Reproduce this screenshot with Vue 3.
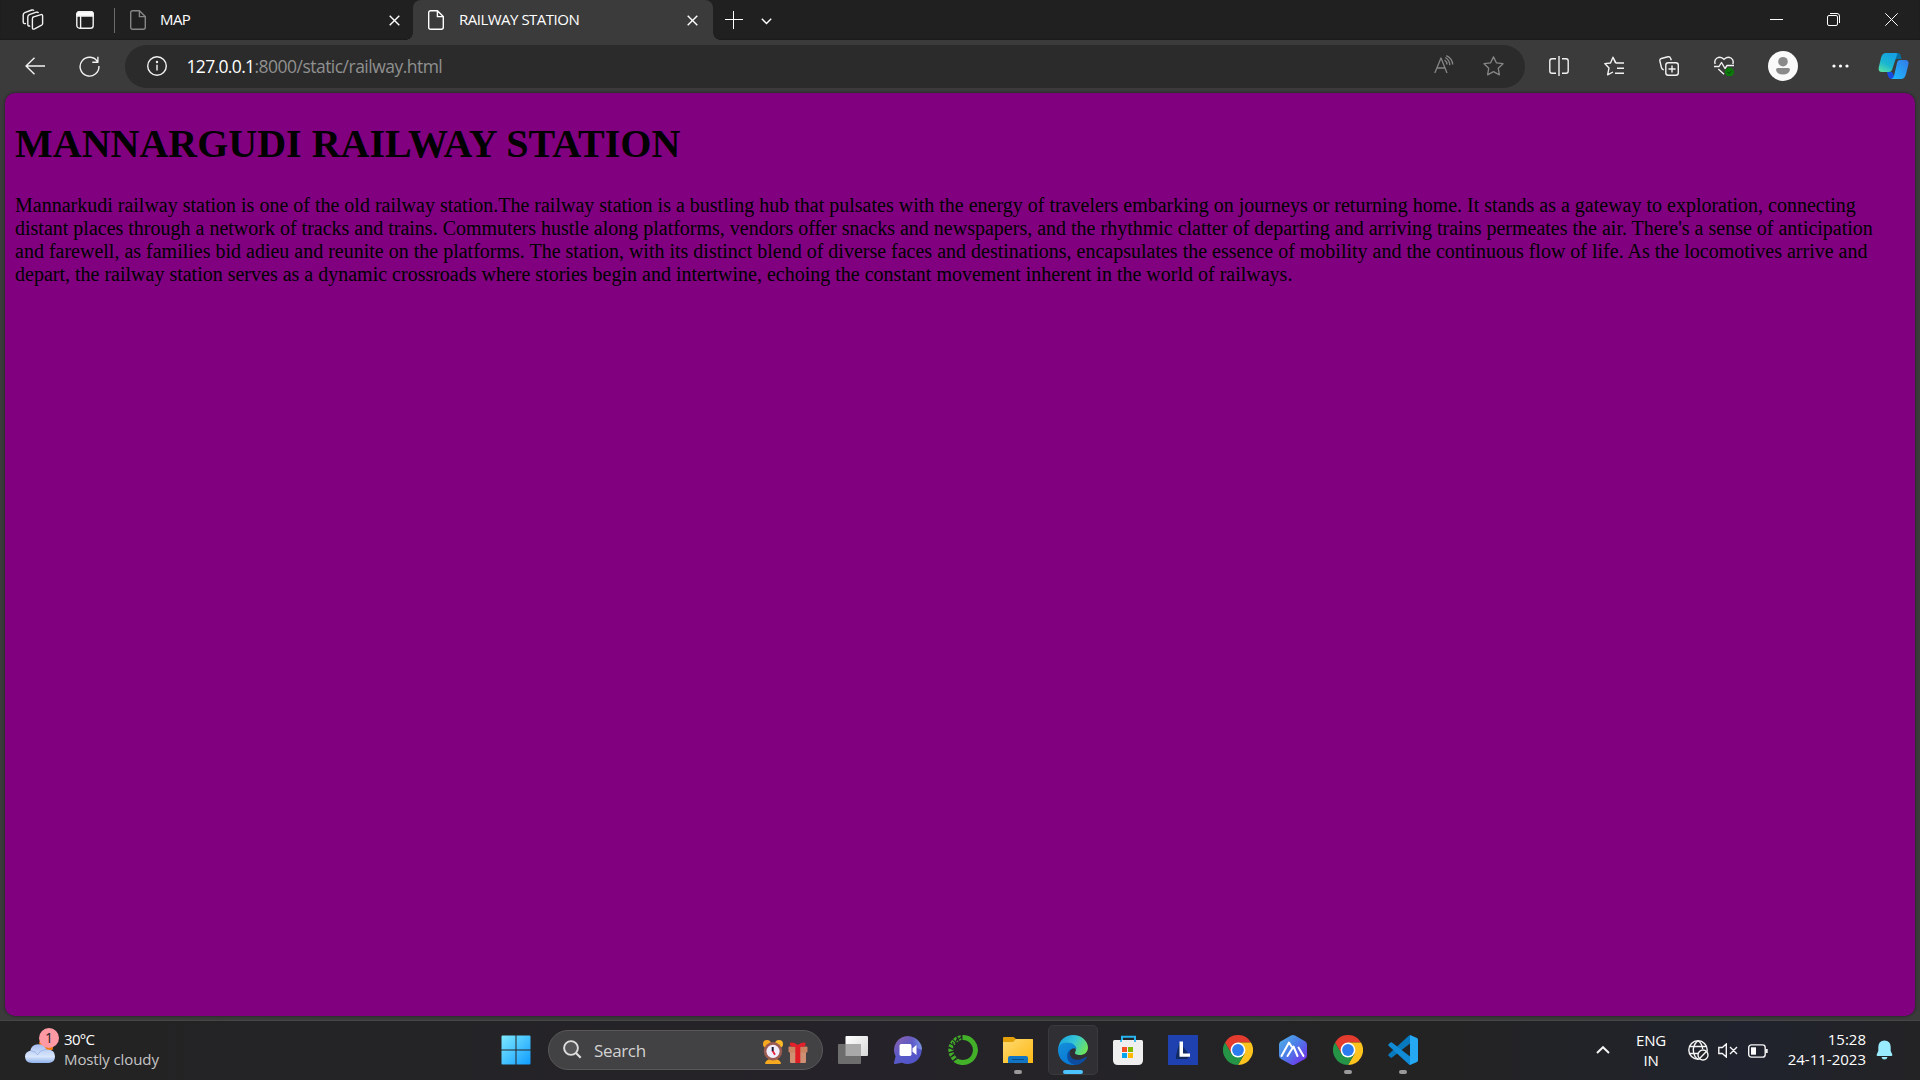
<script setup>
const paragraph =
  "Mannarkudi railway station is one of the old railway station.The railway station is a bustling hub that pulsates with the energy of travelers embarking on journeys or returning home. It stands as a gateway to exploration, connecting distant places through a network of tracks and trains. Commuters hustle along platforms, vendors offer snacks and newspapers, and the rhythmic clatter of departing and arriving trains permeates the air. There's a sense of anticipation and farewell, as families bid adieu and reunite on the platforms. The station, with its distinct blend of diverse faces and destinations, encapsulates the essence of mobility and the continuous flow of life. As the locomotives arrive and depart, the railway station serves as a dynamic crossroads where stories begin and intertwine, echoing the constant movement inherent in the world of railways."

const apps = [
  { id: 'taskview' },
  { id: 'chat' },
  { id: 'anaconda' },
  { id: 'folder', running: true },
  { id: 'edge', active: true },
  { id: 'store' },
  { id: 'lens' },
  { id: 'chrome' },
  { id: 'hex' },
  { id: 'chrome', running: true },
  { id: 'code', running: true },
]
</script>

<template>
  <div class="screen">
    <header class="tabstrip">
      <div class="strip-btn workspaces">
        <svg width="22" height="22" viewBox="0 0 22 22" class="line">
          <path d="M10.8 8.2 19 5.6Q20.6 5.2 20.6 6.8V14.4Q20.6 15.5 19.6 16.1L12.6 19.8Q10.4 20.7 10.4 18.8V9.8Q10.4 8.6 11.4 8.2Z" />
          <path d="M8.2 16.8Q5.8 17.6 5.8 15.5V8Q5.8 6.3 7.3 5.7L14.3 3.2Q16 2.8 16.3 4.2" />
          <path d="M4 14.4Q1.2 15.2 1.2 13V6Q1.2 4.3 2.7 3.7L9.8 1Q11.4.6 11.8 1.8" />
        </svg>
      </div>
      <div class="strip-btn actions">
        <svg width="18" height="18" viewBox="0 0 18 18" class="line">
          <rect x=".8" y=".8" width="16.4" height="16.4" rx="2.8" />
          <path d="M.8 5V3.2Q.8.8 3.2.8H14.8Q17.2.8 17.2 3.2V5Z" fill="#fff" />
          <path d="M4.6 5V17" />
        </svg>
      </div>
      <i class="divider"></i>
      <div class="tab">
        <svg class="doc dim" width="16" height="20" viewBox="0 0 16 20"><path d="M2.7.7H9.4L15.3 6.6V17.3Q15.3 19.3 13.3 19.3H2.7Q.7 19.3.7 17.3V2.7Q.7.7 2.7.7ZM9.4.7V6.6H15.3" /></svg>
        <span class="title map">MAP</span>
        <svg class="x" width="11" height="11" viewBox="0 0 11 11"><path d="M.7.7 10.3 10.3M10.3.7.7 10.3" /></svg>
      </div>
      <div class="tab current">
        <svg class="doc" width="16" height="20" viewBox="0 0 16 20"><path d="M2.7.7H9.4L15.3 6.6V17.3Q15.3 19.3 13.3 19.3H2.7Q.7 19.3.7 17.3V2.7Q.7.7 2.7.7ZM9.4.7V6.6H15.3" /></svg>
        <span class="title rail">RAILWAY STATION</span>
        <svg class="x" width="11" height="11" viewBox="0 0 11 11"><path d="M.7.7 10.3 10.3M10.3.7.7 10.3" /></svg>
      </div>
      <svg class="plus" width="18" height="18" viewBox="0 0 18 18"><path d="M0 8.5H18M8.5 0V18" /></svg>
      <svg class="more" width="11" height="7" viewBox="0 0 11 7"><path d="M.8.8 5.5 5.6 10.2.8" /></svg>
      <div class="window-controls">
        <svg width="13" height="13" viewBox="0 0 13 13"><path d="M0 6.5H13" /></svg>
        <svg width="13" height="13" viewBox="0 0 13 13"><rect x=".5" y="2.5" width="10" height="10" rx="1.5" /><path d="M3 .5H10Q12.5.5 12.5 3V10" /></svg>
        <svg width="13" height="13" viewBox="0 0 13 13"><path d="M.3.3 12.7 12.7M12.7.3.3 12.7" /></svg>
      </div>
    </header>

    <nav class="toolbar">
      <svg class="back line" width="20" height="18" viewBox="0 0 20 18"><path d="M20 9H1M9.5.7 1 9 9.5 17.3" /></svg>
      <svg class="reload line" width="21" height="21" viewBox="0 0 21 21"><path d="M18.8 6.2A9.4 9.4 0 1 0 19.9 10M18.9.7V6.2H13.3" /></svg>
      <div class="address">
        <svg class="info line" width="20" height="20" viewBox="0 0 20 20"><circle cx="10" cy="10" r="9.3" /><path d="M10 8.8V14.5" /><circle cx="10" cy="6" r=".5" fill="#fff" /></svg>
        <span class="url"><b>127.0.0.1</b>:8000/static/railway.html</span>
        <svg class="read" width="20" height="19" viewBox="0 0 20 19"><path d="M.8 18 7 3 13 18M3 13H11M10.5 5Q13 6.5 13 9.5M11.2 2.5Q15.8 5 15.8 10.3M12.3.6Q18.5 3.7 18.7 9.5" /></svg>
        <svg class="star" width="21" height="20" viewBox="0 0 21 20"><path d="M10.5.9 13.4 6.8 20 7.7 15.3 12.3 16.4 18.8 10.5 15.7 4.6 18.8 5.7 12.3 1 7.7 7.6 6.8Z" /></svg>
      </div>
      <div class="tools">
        <span><svg class="line" width="20" height="20" viewBox="0 0 20 20"><path d="M7 2.8H3Q.8 2.8.8 5V15Q.8 17.2 3 17.2H7M13 2.8H17Q19.2 2.8 19.2 5V15Q19.2 17.2 17 17.2H13M10 0V20" /></svg></span>
        <span><svg class="line" width="20" height="20" viewBox="0 0 20 20"><path d="M11.5 7 9 1.2 6.5 7 .8 7.6 5 12.1 3.6 18.8 9 16M9 1.2 12 7H20M13 12.2H20M11 17.2H20" /></svg></span>
        <span><svg class="line" width="20" height="20" viewBox="0 0 20 20"><rect x="6.8" y="6.8" width="12.5" height="12.5" rx="2.5" /><path d="M13 9.5V16.6M9.5 13H16.6M4.8 13.7Q3 13.7 2.5 11.8L.9 5Q.5 3 2.3 2.5L9 .8Q11 .4 11.5 2L12.3 4.2" /></svg></span>
        <span><svg class="line heart" width="20" height="20" viewBox="0 0 20 20"><path d="M1.2 8Q-.2 4 3 2Q7-.2 10 3.4Q13-.2 17 2Q20.2 4 18.8 8M0 10.5H5L7.5 6.5 11 12.5 13 9.5H20M4.3 13 10 18.3" /><circle cx="15.5" cy="16" r="4.5" fill="#0b7a0b" stroke="none" /><path d="M13.4 16.2 15 17.5 17.6 14.8" stroke="#07400b" stroke-width="1" /></svg></span>
        <span class="profile"><svg width="30" height="30" viewBox="0 0 30 30"><circle cx="15" cy="15" r="15" fill="#fafafa" /><circle cx="15" cy="10.7" r="4.8" fill="#8a8a8a" /><path d="M9.8 17H20.2Q22 17 22 18.8 21 23.5 15 23.5T8 18.8Q8 17 9.8 17Z" fill="#8a8a8a" /></svg></span>
        <span class="dots"><svg width="17" height="4" viewBox="0 0 17 4" fill="#fff"><circle cx="2" cy="2" r="1.6" /><circle cx="8.5" cy="2" r="1.6" /><circle cx="15" cy="2" r="1.6" /></svg></span>
        <span class="copilot">
          <svg width="31" height="28" viewBox="0 0 31 28">
            <defs>
              <linearGradient id="cp1" x1="0" y1="1" x2=".5" y2="0"><stop offset="0" stop-color="#62e5a0" /><stop offset=".5" stop-color="#1bb7cf" /><stop offset="1" stop-color="#16a1e2" /></linearGradient>
              <linearGradient id="cp2" x1="0" y1="1" x2="1" y2="0"><stop offset="0" stop-color="#1ac0ff" /><stop offset="1" stop-color="#3479e5" /></linearGradient>
            </defs>
            <path d="M15 1H20Q22 1 22.6 3L23.7 7H18Q15.5 7 15 10Z" fill="#086c9c" />
            <path d="M9 20H14L18 27H14Q10.8 27 10 24Z" fill="#174dde" />
            <path d="M8 1H18Q20 1 19 3L14 18Q13.3 20 11 20H4Q0 20 .7 15.5L3 6Q4.2 1 8 1Z" fill="url(#cp1)" />
            <path d="M20 8H27Q31 8 30.5 12L28 22Q26.8 27 23 27H13Q15.3 26.8 16 24L19 11Q19.5 8 22 8Z" fill="url(#cp2)" />
          </svg>
        </span>
      </div>
    </nav>

    <main class="viewport">
      <article class="page">
        <h1>MANNARGUDI RAILWAY STATION</h1>
        <p>{{ paragraph }}</p>
      </article>
    </main>

    <footer class="taskbar">
      <div class="weather">
        <div class="cloud">
          <svg width="30" height="24" viewBox="0 0 30 24">
            <defs><linearGradient id="cl" x1="0" y1="0" x2="0" y2="1"><stop offset="0" stop-color="#a6bdf0" /><stop offset=".65" stop-color="#d9e6fb" /><stop offset="1" stop-color="#8fb1ec" /></linearGradient></defs>
            <path d="M14 2H26Q29 5 27.5 10H16Z" fill="#f27a12" />
            <path d="M7 23Q0 22.5 0 16.5 .2 11.8 5.3 10.8 6.5 4.5 13 4.3 19 4.3 21.5 9.6 29.8 9.2 30 16.3 30 22.5 24 23Z" fill="url(#cl)" />
            <path d="M6 11Q11 11 12.5 15 15.5 9.5 21.5 9.6" fill="none" stroke="#87a5df" stroke-width="1" opacity=".6" />
          </svg>
          <em>1</em>
        </div>
        <div class="weather-text"><span class="temp">30°C</span><span class="sky">Mostly cloudy</span></div>
      </div>

      <div class="center">
        <div class="slot">
          <svg width="30" height="30" viewBox="0 0 30 30">
            <defs><linearGradient id="win" x1="0" y1="0" x2="1" y2="1"><stop offset="0" stop-color="#7eeaff" /><stop offset="1" stop-color="#0f9bff" /></linearGradient></defs>
            <path d="M1.5.5H14.5V14.5H.5V1.5Q.5.5 1.5.5ZM15.5.5H28.5Q29.5.5 29.5 1.5V14.5H15.5ZM.5 15.5H14.5V29.5H1.5Q.5 29.5.5 28.5ZM15.5 15.5H29.5V28.5Q29.5 29.5 28.5 29.5H15.5Z" fill="url(#win)" />
          </svg>
        </div>
        <div class="search">
          <svg class="lens" width="19" height="19" viewBox="0 0 19 19"><circle cx="8" cy="8" r="6.9" fill="#555456" stroke="#dedede" stroke-width="1.9" /><path d="M13 13 17.7 17.7" stroke="#dedede" stroke-width="2.2" /></svg>
          <span>Search</span>
          <svg class="clock" width="20" height="24" viewBox="0 0 20 24">
            <circle cx="4" cy="4" r="4" fill="#f7a91f" /><circle cx="16" cy="4" r="4" fill="#f9b926" />
            <path d="M2 23Q4 18.5 10 18.5T18 23Q18 24 17 24H3Q2 24 2 23Z" fill="#f7a91f" />
            <circle cx="10" cy="11.3" r="9.2" fill="#9c5b50" /><circle cx="10" cy="11.3" r="6.6" fill="#f1ecfa" />
            <path d="M9.7 7V11.5" stroke="#1c1c2c" stroke-width="2" /><path d="M9.7 11 12 14.8" stroke="#ed1c3a" stroke-width="1.8" />
          </svg>
          <svg class="gift" width="20" height="21" viewBox="0 0 20 21">
            <path d="M2 9H18V20Q18 21 17 21H3Q2 21 2 20Z" fill="#cf8f72" /><rect x=".5" y="4.5" width="19" height="6" rx="1" fill="#c98462" />
            <path d="M7.3 4H12.3V21H7.3Z" fill="#e01d25" /><path d="M2 .8Q6-.5 9.8 3 14-.5 17.5.8 18 3 16 4.8H3.5Q1.5 3 2 .8Z" fill="#e4202a" />
          </svg>
        </div>
        <div v-for="(app, i) in apps" :key="i" class="slot" :class="{ active: app.active, running: app.running }">
          <svg v-if="app.id === 'taskview'" width="30" height="30" viewBox="0 0 30 30">
            <defs><linearGradient id="tv" x1="0" y1="0" x2="1" y2="1"><stop offset="0" stop-color="#fff" /><stop offset="1" stop-color="#d8d8d8" /></linearGradient></defs>
            <rect x="7.5" y="1" width="22.5" height="20" rx="1" fill="url(#tv)" /><rect y="9" width="23" height="20" rx="1" fill="#6d6d6d" /><path d="M7.5 9H23V21H7.5Z" fill="#a9a9a9" />
          </svg>
          <svg v-else-if="app.id === 'chat'" width="30" height="30" viewBox="0 0 30 30">
            <defs><linearGradient id="ch" x1="0" y1="0" x2=".8" y2="1"><stop offset="0" stop-color="#8f62a9" /><stop offset=".5" stop-color="#5b5ac8" /><stop offset="1" stop-color="#5054c8" /></linearGradient><linearGradient id="ch2" x1="0" y1="0" x2="1" y2="0"><stop offset=".3" stop-color="#7fa1e8" stop-opacity="0" /><stop offset="1" stop-color="#8ca8f0" stop-opacity=".8" /></linearGradient></defs>
            <path d="M15 1A14 14 0 1 1 9 27.8L2 29Q.6 29.2 1 27.7L2.6 21.5A14 14 0 0 1 15 1Z" fill="url(#ch)" /><path d="M15 1A14 14 0 0 1 29 15L15 9Z" fill="url(#ch2)" />
            <rect x="6.5" y="9" width="12" height="12" rx="1.7" fill="#fff" /><path d="M19.5 13.3 23.5 10V20L19.5 16.8Z" fill="#fff" />
          </svg>
          <svg v-else-if="app.id === 'anaconda'" width="30" height="30" viewBox="0 0 30 30" fill="none" stroke="#43b02a">
            <path d="M14.5 2.5A12.5 12.5 0 1 1 7 24.7" stroke-width="5" /><path d="M13 2.6A12.5 12.5 0 0 0 8 25" stroke-width="5" stroke-dasharray="3 1" />
            <path d="M13.5 2 8 6M10 2 7 9M4.5 7 6 13M1 12 5.5 15M1 18 6 16M3 22 6 19M5 26 10 23" stroke="#242427" stroke-width="1.1" />
          </svg>
          <svg v-else-if="app.id === 'folder'" width="30" height="30" viewBox="0 0 30 30">
            <defs><linearGradient id="fo" x1="0" y1="0" x2="1" y2="1"><stop offset="0" stop-color="#ffda70" /><stop offset="1" stop-color="#fdb813" /></linearGradient></defs>
            <path d="M1 2H10Q11 2 11.6 2.8L13 4H29Q30 4 30 5V10H0V3Q0 2 1 2Z" fill="#e3a008" /><path d="M0 7H10L13 4H29Q30 4 30 5V28H0Z" fill="url(#fo)" />
            <path d="M5 28V23Q5 21 7 21H23Q25 21 25 23V28Z" fill="#1175c4" /><path d="M9 24.5H21" stroke="#084d86" />
          </svg>
          <svg v-else-if="app.id === 'edge'" width="30" height="30" viewBox="0 0 30 30">
            <defs>
              <linearGradient id="e1" x1="0" y1=".2" x2="1" y2=".6"><stop offset="0" stop-color="#16a2df" /><stop offset=".5" stop-color="#36c5d6" /><stop offset="1" stop-color="#6fe35b" /></linearGradient>
              <linearGradient id="e2" x1="0" y1="0" x2=".5" y2="1"><stop offset="0" stop-color="#148fd9" /><stop offset="1" stop-color="#0879d5" /></linearGradient>
            </defs>
            <path d="M.3 13C1.3 5 7.5 0 15 0 24 0 30 6.5 30 12.5 30 17.5 26 20 22 20 18.5 20 16.5 18.7 17 17.5 18.5 15 18.5 11 13 9.5Z" fill="url(#e1)" />
            <path d="M0 15C0 10.5 4 7.5 9 7.5 15 7.5 18.5 11 18.5 14 13.5 11 9.5 17 11.7 22.5 13 26 16 29 19 29.5 9 32 0 25 0 15Z" fill="url(#e2)" />
            <path d="M12 14.5C9.5 25 20 27.5 27.8 22 28.6 21.5 29 22.2 28.5 23 25.7 27.3 21.5 30 17 30 8.5 28.5 7 19 12 14.5Z" fill="#0c4da1" />
          </svg>
          <svg v-else-if="app.id === 'store'" width="30" height="30" viewBox="0 0 30 30">
            <path d="M9 6V1.8H22V6" fill="none" stroke="#28b4ee" stroke-width="2" /><path d="M1.5 5H28.5Q30 5 30 6.5V25Q30 30 25 30H5Q0 30 0 25V6.5Q0 5 1.5 5Z" fill="#efefef" /><path d="M8 5V7M22 5V7" stroke="#28b4ee" stroke-width="1.7" />
            <path d="M9 12H14V17H9Z" fill="#f25022" /><path d="M15 12H20V17H15Z" fill="#7fba00" /><path d="M9 18H14V23H9Z" fill="#00a4ef" /><path d="M15 18H20V23H15Z" fill="#ffb900" />
          </svg>
          <svg v-else-if="app.id === 'lens'" width="30" height="30" viewBox="0 0 30 30">
            <path d="M0 0H30V30H0Z" fill="#1f40af" /><path d="M11.5 7 8 21V24H19L22 21Z" fill="#10295e" /><path d="M11.5 6.5H15V18.5H22V21.8H11.5Z" fill="#fff" />
          </svg>
          <svg v-else-if="app.id === 'chrome'" width="30" height="30" viewBox="0 0 30 30">
            <path d="M2 7.5A15 15 0 0 1 28 7.5H15L8.5 18.8Z" fill="#e33b2e" /><path d="M28 7.5A15 15 0 0 1 15 30L21.5 18.8 15 7.5Z" fill="#fcc31e" /><path d="M15 30A15 15 0 0 1 2 7.5L8.5 18.8H21.5Z" fill="#259447" />
            <circle cx="15" cy="15" r="7.4" fill="#fff" /><circle cx="15" cy="15" r="5.9" fill="#2c7cf0" />
          </svg>
          <svg v-else-if="app.id === 'hex'" width="30" height="30" viewBox="0 0 30 30">
            <defs><linearGradient id="hx" x1="0" y1="0" x2="1" y2="1"><stop offset="0" stop-color="#4fb4e8" /><stop offset=".45" stop-color="#4c7ee8" /><stop offset="1" stop-color="#7a22ea" /></linearGradient></defs>
            <path d="M13 .6Q15-.4 17 .6L27 6.2Q29 7.4 29 9.5V20.5Q29 22.7 27 23.9L17 29.4Q15 30.4 13 29.4L3 23.9Q1 22.7 1 20.5V9.5Q1 7.4 3 6.2Z" fill="url(#hx)" />
            <path d="M3.5 21 11 7.5 13.5 11.5M9.5 21 15.5 11.5 19.5 21M20.5 12.5 25.5 21" fill="none" stroke="#fff" stroke-width="2" stroke-linecap="round" stroke-linejoin="round" />
          </svg>
          <svg v-else width="30" height="30" viewBox="0 0 30 30">
            <path d="M22 8.5 4 22.5Q3.2 23 2.5 22.5L.6 20.8Q-.2 20 .6 19.2L21 .5Q22 0 22.5 0Z" fill="#0879be" /><path d="M22 21.5 4 7.5Q3.2 7 2.5 7.5L.6 9.2Q-.2 10 .6 10.8L21 29.5Q22 30 22.5 30Z" fill="#118bd5" /><path d="M22 0 29 3Q30 3.6 30 5V25Q30 26.3 29 27L22 30Z" fill="#25a9f2" />
          </svg>
        </div>
      </div>

      <div class="tray">
        <svg class="up" width="14" height="8" viewBox="0 0 14 8"><path d="M1 7 7 1.2 13 7" /></svg>
        <div class="lang"><span>ENG</span><span>IN</span></div>
        <svg class="globe" width="21" height="21" viewBox="0 0 21 21"><circle cx="10" cy="10" r="9.2" /><path d="M1.5 6.5H18.5M1.5 13.5H10M10 .8Q4.5 5 5.5 12 6.2 17 10 19.2M10 .8Q14.5 4 14.6 9" /><circle cx="15" cy="15" r="5" fill="#222327" /><path d="M11.6 18.4 18.4 11.6" /></svg>
        <svg class="mute" width="20" height="15" viewBox="0 0 20 15"><path d="M8.3 1V14L4.3 10.5H.8V4.5H4.3ZM12 4 19 11M19 4 12 11" /></svg>
        <svg class="battery" width="20" height="14" viewBox="0 0 20 14"><rect x=".7" y=".9" width="16.5" height="12.2" rx="2.7" /><path class="charge" d="M3 3.3H8V10.7H3Z" /><path d="M18.7 5V9" stroke-width="2" /></svg>
        <div class="datetime"><span class="time">15:28</span><span class="date">24-11-2023</span></div>
        <svg class="bell" width="17" height="20" viewBox="0 0 17 20"><path d="M8.5.5Q14.5.8 14.7 7V11L16.3 14.6Q16.7 16 15.5 16H1.5Q.3 16 .7 14.6L2.3 11V7Q2.5.8 8.5.5ZM5.5 17H11.5Q11 19.5 8.5 19.5T5.5 17Z" fill="#99ebff" /></svg>
      </div>
    </footer>
  </div>
</template>

<style>
body { margin: 0; overflow: hidden; background: #3b3b3b; }
</style>

<style scoped>
* { box-sizing: border-box; }
.screen { width: 1920px; height: 1080px; display: flex; flex-direction: column; background: #3b3b3b; font-family: "Open Sans", "Noto Sans", sans-serif; color: #fff; overflow: hidden; }
svg { display: block; flex: none; }
.line { fill: none; stroke: #f2f2f2; stroke-width: 1.4; stroke-linejoin: round; }

.tabstrip { height: 40px; flex: none; display: flex; background: #202020; box-shadow: inset 0 -1px 1px #1b1b1b; }
.strip-btn { width: 53px; height: 40px; display: flex; align-items: center; justify-content: center; }
.workspaces { margin-left: 6px; }
.actions { padding-right: 1px; }
.divider { width: 1px; height: 25px; margin: 8px 0 0 2px; background: #6c6c6c; }
.tab { width: 298px; height: 40px; display: flex; align-items: center; padding: 0 13px 0 15px; }
.tab.current { width: 300px; padding-right: 15px; background: #3b3b3b; border-radius: 8px 8px 0 0; position: relative; }
.tab.current::before, .tab.current::after { content: ""; position: absolute; bottom: 0; width: 7px; height: 7px; }
.tab.current::before { left: -7px; background: radial-gradient(circle at 0 0, transparent 6.5px, #3b3b3b 7px); }
.tab.current::after { right: -7px; background: radial-gradient(circle at 100% 0, transparent 6.5px, #3b3b3b 7px); }
.doc, .x, .plus, .more, .window-controls svg { fill: none; stroke: #fff; stroke-width: 1.4; }
.doc.dim { stroke: #858585; }
.title { margin-left: 15px; flex: 1; font-size: 15px; line-height: 20px; white-space: nowrap; padding-bottom: 3px; }
.title.map { margin-left: 14px; letter-spacing: -.6px; }
.title.rail { letter-spacing: -.5px; }
.x { margin-top: 1px; }
.plus { margin: 11px 0 0 12px; stroke-width: 1; }
.more { margin: 18px 0 0 18px; }
.window-controls { margin-left: auto; padding: 13px 22px 0 0; display: flex; gap: 44px; }
.window-controls svg { stroke-width: 1; }
.window-controls svg:last-child { margin-left: 1px; }

.toolbar { height: 53px; flex: none; display: flex; align-items: flex-start; }
.back { margin: 17px 0 0 25px; }
.reload { margin: 16px 0 0 34px; }
.address { width: 1400px; height: 43px; margin: 5px 0 0 25px; padding: 0 21px 0 22px; display: flex; align-items: center; border-radius: 22px; background: #2b2b2b; }
.url { flex: 1; margin-left: 19.5px; padding-bottom: 2px; font-size: 17.5px; line-height: 24px; color: #909090; letter-spacing: -.52px; white-space: nowrap; }
.url b { font-weight: 400; color: #fff; letter-spacing: -.65px; }
.info { margin-top: -1px; }
.read, .star { fill: none; stroke: #868686; stroke-width: 1.3; stroke-linejoin: round; }
.read { margin: -4px 29px 0 0; }
.star { margin-top: -1px; }
.tools { display: flex; margin: 5px 0 0 6px; height: 42px; }
.tools span { width: 55px; display: flex; align-items: center; justify-content: center; }
.tools .profile { width: 64px; }
.tools .dots { width: 51px; }
.tools .copilot { width: 54px; }

.viewport { height: 927px; flex: none; padding: 0 5px 4px; }
.page { height: 923px; border-radius: 10px; background: #800080; color: #000; font-family: "Liberation Serif", "Times New Roman", serif; padding: 28px 10px 0; box-shadow: 0 0 3px rgba(0, 0, 0, .5); }
h1 { margin: 0; font-size: 40px; line-height: 46px; font-weight: 700; }
p { margin: 27px 0 0; font-size: 20px; line-height: 23px; }

.taskbar { height: 60px; flex: none; display: flex; align-items: stretch; background: linear-gradient(90deg, #232323 0, #252329 45%, #232323 75%, #20232d 91%, #232325); border-top: 1px solid #464646; font-size: 15px; }
.weather { width: 488px; flex: none; display: flex; }
.cloud { position: relative; margin: 19px 0 0 25px; height: 24px; }
.cloud em { position: absolute; left: 14px; top: -12px; width: 20px; height: 20px; border-radius: 50%; background: #ff99a4; color: #222; font-size: 14px; line-height: 20px; text-align: center; font-style: normal; }
.weather-text { display: flex; flex-direction: column; margin: 8px 0 0 9px; line-height: 20px; }
.temp { letter-spacing: -.7px; }
.sky { color: #c5c5c5; letter-spacing: -.1px; }
.center { display: flex; flex: none; align-items: center; height: 58px; }
.slot { width: 55px; height: 50px; display: flex; align-items: center; justify-content: center; position: relative; }
.slot.active::before { content: ""; position: absolute; inset: 0 2.5px; border-radius: 5px; background: #303034; border: 1px solid #3a3a3d; }
.slot svg { position: relative; }
.slot.running::after, .slot.active::after { content: ""; position: absolute; bottom: 1px; left: 23.5px; width: 8px; height: 4px; border-radius: 2px; background: #9a9a9a; }
.slot.active::after { left: 17.5px; width: 20px; background: #4cc2ff; }
.search { width: 275px; height: 40px; margin: 0 2.5px 0 5px; display: flex; align-items: center; border-radius: 20px; border: 1px solid #595859; background: #424143; padding: 0 14px; }
.search span { margin-left: 12px; flex: 1; font-size: 17px; color: #d2d2d2; letter-spacing: -.35px; }
.lens { margin-top: -2px; }
.clock { margin: 3px 5px 0 0; }
.gift { margin-top: 5px; }
.tray { width: 334px; margin-left: auto; flex: none; display: flex; }
.tray svg { fill: none; stroke: #f5f5f5; stroke-width: 1.4; }
.tray .up { margin: 25px 0 0 10px; stroke-width: 2; }
.lang { width: 40px; margin: 9px 0 0 21px; display: flex; flex-direction: column; text-align: center; line-height: 20px; letter-spacing: -.2px; }
.globe { margin: 19px 0 0 17px; }
.mute { margin: 22px 0 0 9px; }
.battery { margin: 23px 0 0 10px; }
.battery .charge { fill: #fff; stroke: none; }
.datetime { width: 90px; margin: 8px 0 0 8px; display: flex; flex-direction: column; text-align: right; line-height: 20px; white-space: nowrap; }
.tray .bell { margin: 19px 0 0 10px; stroke: none; }
</style>
